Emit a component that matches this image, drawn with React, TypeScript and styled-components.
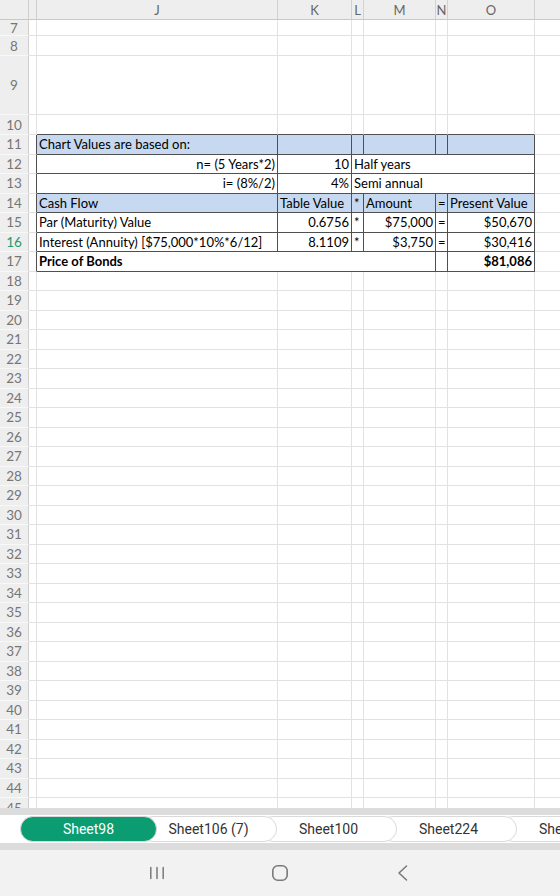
import React from "react";
import styled, { createGlobalStyle } from "styled-components";

const GlobalStyle = createGlobalStyle`
  html, body {
    margin: 0;
    padding: 0;
    background: #ffffff;
  }
  body {
    width: 560px;
    height: 896px;
    overflow: hidden;
    font-family: Lato, "Open Sans", sans-serif;
  }
`;

// row header, narrow I, then J K L M N O P
const COLUMNS = "29px 8px 241px 74px 12px 72px 12px 87px 60px";
const LETTERS = ["J", "K", "L", "M", "N", "O", ""];

const GRID = "#e2e2e2";
const EDGE = "#505050";
const BAND = "#c6d9f1";

type CellDef = {
  text?: string;
  align?: "left" | "right";
  span?: number;
  bold?: boolean;
};

type TableRow = {
  fill?: boolean;
  cells: CellDef[];
};

// rows 11..17, columns J..O
const TABLE: Record<number, TableRow> = {
  11: { fill: true, cells: [{ text: "Chart Values are based on:" }, {}, {}, {}, {}, {}] },
  12: {
    cells: [
      { text: "n= (5 Years*2)", align: "right" },
      { text: "10", align: "right" },
      { text: "Half years", span: 4 },
    ],
  },
  13: {
    cells: [
      { text: "i= (8%/2)", align: "right" },
      { text: "4%", align: "right" },
      { text: "Semi annual", span: 4 },
    ],
  },
  14: {
    fill: true,
    cells: [
      { text: "Cash Flow" },
      { text: "Table Value" },
      { text: "*" },
      { text: "Amount" },
      { text: "=" },
      { text: "Present Value" },
    ],
  },
  15: {
    cells: [
      { text: "Par (Maturity) Value" },
      { text: "0.6756", align: "right" },
      { text: "*" },
      { text: "$75,000", align: "right" },
      { text: "=" },
      { text: "$50,670", align: "right" },
    ],
  },
  16: {
    cells: [
      { text: "Interest (Annuity) [$75,000*10%*6/12]" },
      { text: "8.1109", align: "right" },
      { text: "*" },
      { text: "$3,750", align: "right" },
      { text: "=" },
      { text: "$30,416", align: "right" },
    ],
  },
  17: {
    cells: [
      { text: "Price of Bonds", span: 4, bold: true },
      {},
      { text: "$81,086", align: "right", bold: true },
    ],
  },
};

const ROWS: { n: number; h: number }[] = [
  { n: 7, h: 16 },
  { n: 8, h: 20 },
  { n: 9, h: 59 },
  { n: 10, h: 20 },
  ...Array.from({ length: 34 }, (_, i) => ({ n: 11 + i, h: 19.5 })),
  { n: 45, h: 20 },
];

const ACTIVE_ROW = 16;

const TABS = ["Sheet98", "Sheet106 (7)", "Sheet100", "Sheet224", "Sheet225"];

const App: React.FC = () => {
  return (
    <>
      <GlobalStyle />
      <Screen>
        <Sheet>
          <GridRow $h={20}>
            <Corner />
            <Corner />
            {LETTERS.map((l, i) => (
              <ColHead key={i}>{l}</ColHead>
            ))}
          </GridRow>
          {ROWS.map(({ n, h }) => {
            const row = TABLE[n];
            const inTable = !!row;
            return (
              <GridRow key={n} $h={h}>
                <RowHead $active={n === ACTIVE_ROW}>{n}</RowHead>
                <Cell $darkR={inTable} />
                {row
                  ? row.cells.map((c, i) => (
                      <Cell
                        key={i}
                        $span={c.span}
                        $align={c.align}
                        $bold={c.bold}
                        $fill={row.fill}
                        $darkR
                        $darkB
                      >
                        {c.text}
                      </Cell>
                    ))
                  : LETTERS.slice(0, 6).map((l) => <Cell key={l} $darkB={n === 10} />)}
                <Cell />
              </GridRow>
            );
          })}
        </Sheet>

        <TabStrip>
          {TABS.map((t, i) => (
            <Tab key={t} $active={i === 0} style={{ zIndex: TABS.length - i }}>
              {t}
            </Tab>
          ))}
        </TabStrip>

        <NavBar>
          <NavButton>
            <svg width="24" height="24" viewBox="0 0 24 24" fill="none" stroke="#7a7a7a" strokeWidth="1.5" strokeLinecap="round">
              <path d="M5.8 6.5v11M12 6.5v11M18.2 6.5v11" />
            </svg>
          </NavButton>
          <NavButton>
            <svg width="24" height="24" viewBox="0 0 24 24" fill="none" stroke="#7a7a7a" strokeWidth="1.6">
              <rect x="4.8" y="4.8" width="14.4" height="14.4" rx="5" />
            </svg>
          </NavButton>
          <NavButton>
            <svg width="24" height="24" viewBox="0 0 24 24" fill="none" stroke="#7a7a7a" strokeWidth="1.6" strokeLinecap="round" strokeLinejoin="round">
              <path d="M15.5 5l-7.5 7 7.5 7" />
            </svg>
          </NavButton>
        </NavBar>
      </Screen>
    </>
  );
};

export default App;

const Screen = styled.div`
  width: 560px;
  height: 896px;
  display: flex;
  flex-direction: column;
  overflow: hidden;
`;

const Sheet = styled.div`
  height: 808px;
  flex: none;
  overflow: hidden;
`;

const GridRow = styled.div<{ $h: number }>`
  display: grid;
  grid-template-columns: ${COLUMNS};
  height: ${(p) => p.$h}px;
`;

const Corner = styled.div`
  box-sizing: border-box;
  background: #eeeeee;
  border-right: 1px solid #cfcfcf;
  border-bottom: 1px solid #c8c8c8;
`;

const ColHead = styled.div`
  box-sizing: border-box;
  background: #eeeeee;
  border-right: 1px solid #d2d2d2;
  border-bottom: 1px solid #c8c8c8;
  display: flex;
  align-items: center;
  justify-content: center;
  font-family: Lato, "Open Sans", sans-serif;
  font-size: 13px;
  color: #666666;
  overflow: hidden;
`;

const RowHead = styled.div<{ $active: boolean }>`
  box-sizing: border-box;
  background: #eeeeee;
  border-right: 1px solid #cfcfcf;
  border-bottom: 1px solid #f8f8f8;
  display: flex;
  align-items: center;
  justify-content: center;
  font-family: Lato, "Open Sans", sans-serif;
  font-size: 13.5px;
  color: ${(p) => (p.$active ? "#1f9c6e" : "#767676")};
  overflow: hidden;
`;

const Cell = styled.div<{
  $align?: "left" | "right";
  $fill?: boolean;
  $bold?: boolean;
  $darkR?: boolean;
  $darkB?: boolean;
  $span?: number;
}>`
  grid-column: span ${(p) => p.$span ?? 1};
  box-sizing: border-box;
  display: flex;
  align-items: center;
  justify-content: ${(p) => (p.$align === "right" ? "flex-end" : "flex-start")};
  padding: 0 2px;
  background: ${(p) => (p.$fill ? BAND : "#ffffff")};
  border-right: 1px solid ${(p) => (p.$darkR ? EDGE : GRID)};
  border-bottom: 1px solid ${(p) => (p.$darkB ? EDGE : GRID)};
  font-family: Lato, "Open Sans", sans-serif;
  font-size: 13px;
  font-weight: ${(p) => (p.$bold ? 700 : 400)};
  color: #000000;
  white-space: nowrap;
  overflow: hidden;
`;

const TabStrip = styled.div`
  flex: none;
  height: 28px;
  display: flex;
  align-items: center;
  padding-left: 20px;
  background: #ffffff;
  border-top: 7px solid #dcdcdc;
  border-bottom: 7px solid #dcdcdc;
  overflow: hidden;
`;

const Tab = styled.div<{ $active: boolean }>`
  position: relative;
  flex: none;
  box-sizing: border-box;
  width: 137px;
  height: 26px;
  margin-left: -17px;
  &:first-child {
    margin-left: 0;
  }
  display: flex;
  align-items: center;
  justify-content: center;
  border-radius: 13px;
  border: 1px solid ${(p) => (p.$active ? "#d8d8d8" : "#dadada")};
  background: ${(p) => (p.$active ? "#0b9c72" : "#ffffff")};
  color: ${(p) => (p.$active ? "#ffffff" : "#333333")};
  font-family: Roboto, "Noto Sans", sans-serif;
  font-size: 14px;
  white-space: nowrap;
`;

const NavBar = styled.div`
  flex: 1;
  background: #f2f2f2;
  display: flex;
  align-items: center;
  justify-content: center;
  gap: 99px;
  padding-bottom: 1px;
`;

const NavButton = styled.div`
  width: 24px;
  height: 24px;
  display: flex;
  align-items: center;
  justify-content: center;
`;
